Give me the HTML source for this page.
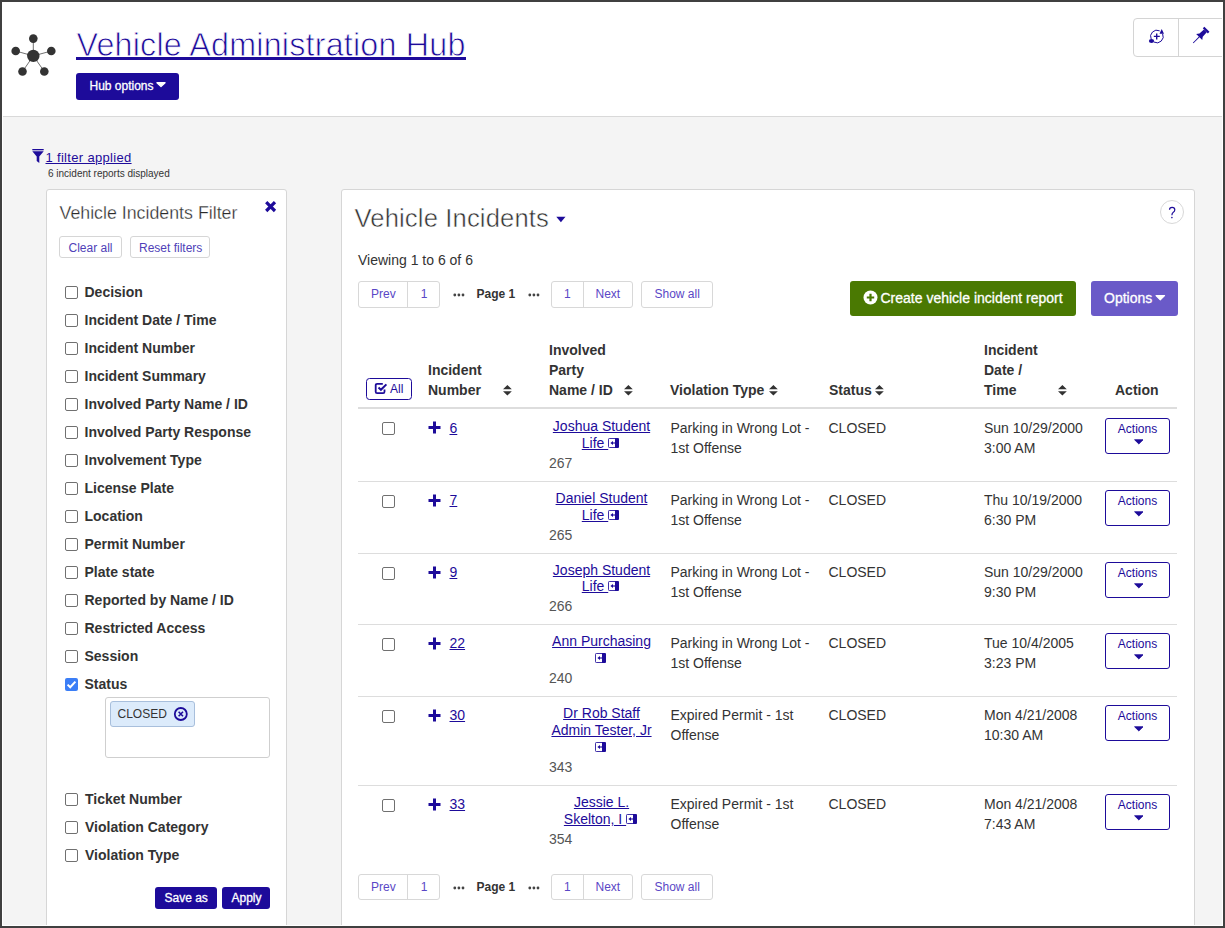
<!DOCTYPE html><html><head><meta charset="utf-8"><style>
html,body{margin:0;padding:0}
body{width:1225px;height:928px;overflow:hidden;position:relative;background:#404040;font-family:"Liberation Sans",sans-serif}
.t{position:absolute;white-space:nowrap}
.b{position:absolute;box-sizing:content-box}
u{text-decoration:underline}
</style></head><body>

<div class="b" style="left:2px;top:2px;width:1221px;height:924px;background:#fff"></div>
<div class="b" style="left:3px;top:117px;width:1219px;height:808px;background:#f4f4f4"></div>
<div class="b" style="left:3px;top:116px;width:1219px;height:1px;background:#d9d9d9"></div>
<svg class="b" style="left:8px;top:30px" width="52" height="50" viewBox="8 30 52 50">
<g stroke="#333" stroke-width="0.7"><line x1="33.3" y1="55.9" x2="33.3" y2="38.6"/><line x1="33.3" y1="55.9" x2="15.7" y2="51"/><line x1="33.3" y1="55.9" x2="51.3" y2="51"/><line x1="33.3" y1="55.9" x2="22.5" y2="71.5"/><line x1="33.3" y1="55.9" x2="44.3" y2="71.5"/></g>
<g fill="#333"><circle cx="33.3" cy="55.9" r="6.2"/><circle cx="33.3" cy="38.6" r="4.3"/><circle cx="15.7" cy="51" r="4.3"/><circle cx="51.3" cy="51" r="4.3"/><circle cx="22.5" cy="71.5" r="4.3"/><circle cx="44.3" cy="71.5" r="4.3"/></g></svg>
<div class="t " style="left:76.50px;top:26.61px;font-size:32.3px;line-height:36px;font-weight:400;color:#1d0b9a;-webkit-text-stroke:0.8px #fff;letter-spacing:0.19px">Vehicle Administration Hub</div>
<div class="b" style="left:76px;top:57px;width:390px;height:3px;background:#1d0b9a"></div>
<div class="b" style="left:76px;top:73px;width:103px;height:27px;background:#1d0b9a;border-radius:3px"></div>
<div class="t " style="left:89.50px;top:78.54px;font-size:12px;line-height:14px;font-weight:400;color:#fff;-webkit-text-stroke:0.3px #fff">Hub options</div>
<svg class="b" style="left:156px;top:82px" width="10" height="6" viewBox="0 0 10 6"><path d="M0.9 0.7 L9.1 0.7 L5 4.6 Z" fill="#fff" stroke="#fff" stroke-width="1.2" stroke-linejoin="round"/></svg>
<div class="b" style="left:1133px;top:18px;width:100px;height:37px;border:1px solid #d4d4d4;border-radius:4px;background:#fff"></div>
<div class="b" style="left:1178px;top:19px;width:1px;height:37px;background:#d4d4d4"></div>
<svg class="b" style="left:1146px;top:26px" width="20" height="20" viewBox="1146 26 20 20">
<path d="M1151.19 39.16 A6.3 6.3 0 0 1 1159.66 30.84" fill="none" stroke="#1d0b9a" stroke-width="1"/>
<path d="M1162.61 33.84 A6.3 6.3 0 0 1 1153.94 42.06" fill="none" stroke="#1d0b9a" stroke-width="1"/>
<path d="M1156.7 33.4 V39.4 M1153.8 36.4 H1159.8" stroke="#1d0b9a" stroke-width="1.4"/>
<path d="M1161.7 28.9 L1164.0 33.7 L1159.5 33.7 Z" fill="#1d0b9a"/>
<ellipse cx="1151.5" cy="41" rx="2.6" ry="1.9" fill="#1d0b9a"/>
</svg>
<svg class="b" style="left:1188px;top:22px" width="26" height="26" viewBox="1188 22 26 26">
<g transform="translate(1206.9,29.3) rotate(45)" fill="#1d0b9a">
<rect x="-3.6" y="0" width="7.2" height="2.2"/>
<path d="M-2 2.2 L2 2.2 L2.3 8.2 L4.3 10.9 L-4.3 10.9 L-2.3 8.2 Z"/>
<rect x="-0.45" y="10.8" width="0.9" height="8.6"/>
</g>
</svg>
<svg class="b" style="left:32px;top:148px" width="12" height="16" viewBox="0 0 12 16">
<rect x="0.3" y="1" width="11.4" height="1.3" fill="#1d0b9a"/>
<path d="M0.3 3.3 L11.7 3.3 L7.3 8.6 L7.3 15 L4.7 13 L4.7 8.6 Z" fill="#1d0b9a"/>
</svg>
<div class="t " style="left:45.50px;top:149.50px;font-size:13px;line-height:15px;font-weight:400;color:#1d0b9a;letter-spacing:0.32px"><u>1 filter applied</u></div>
<div class="t " style="left:48.00px;top:168.23px;font-size:10px;line-height:12px;font-weight:400;color:#333333;">6 incident reports displayed</div>
<div class="b" style="left:46px;top:189px;width:239px;height:760px;border:1px solid #d6d6d6;border-radius:3px;background:#fff"></div>
<div class="t " style="left:59.50px;top:201.53px;font-size:17.8px;line-height:22px;font-weight:400;color:#2a2a2a;-webkit-text-stroke:0.3px #fff">Vehicle Incidents Filter</div>
<svg class="b" style="left:264px;top:200px" width="13" height="13" viewBox="0 0 13 13"><path d="M2.2 2.2 L11 11 M11 2.2 L2.2 11" stroke="#1d0b9a" stroke-width="3.2" stroke-linecap="butt"/></svg>
<div class="b" style="left:59px;top:236px;width:61px;height:20px;border:1px solid #d6d6d6;border-radius:3px;background:#fff"></div>
<div class="t " style="left:68.50px;top:241.24px;font-size:12px;line-height:14px;font-weight:400;color:#4f3fb8;">Clear all</div>
<div class="b" style="left:130px;top:236px;width:78px;height:20px;border:1px solid #d6d6d6;border-radius:3px;background:#fff"></div>
<div class="t " style="left:139.00px;top:241.24px;font-size:12px;line-height:14px;font-weight:400;color:#4f3fb8;">Reset filters</div>
<div class="b" style="left:65px;top:286px;width:11px;height:11px;border:1px solid #707070;border-radius:2px;background:#fff"></div>
<div class="t " style="left:84.50px;top:283.85px;font-size:14px;line-height:16px;font-weight:700;color:#333333;">Decision</div>
<div class="b" style="left:65px;top:314px;width:11px;height:11px;border:1px solid #707070;border-radius:2px;background:#fff"></div>
<div class="t " style="left:84.50px;top:311.85px;font-size:14px;line-height:16px;font-weight:700;color:#333333;">Incident Date / Time</div>
<div class="b" style="left:65px;top:342px;width:11px;height:11px;border:1px solid #707070;border-radius:2px;background:#fff"></div>
<div class="t " style="left:84.50px;top:339.85px;font-size:14px;line-height:16px;font-weight:700;color:#333333;">Incident Number</div>
<div class="b" style="left:65px;top:370px;width:11px;height:11px;border:1px solid #707070;border-radius:2px;background:#fff"></div>
<div class="t " style="left:84.50px;top:367.85px;font-size:14px;line-height:16px;font-weight:700;color:#333333;">Incident Summary</div>
<div class="b" style="left:65px;top:398px;width:11px;height:11px;border:1px solid #707070;border-radius:2px;background:#fff"></div>
<div class="t " style="left:84.50px;top:395.85px;font-size:14px;line-height:16px;font-weight:700;color:#333333;">Involved Party Name / ID</div>
<div class="b" style="left:65px;top:426px;width:11px;height:11px;border:1px solid #707070;border-radius:2px;background:#fff"></div>
<div class="t " style="left:84.50px;top:423.85px;font-size:14px;line-height:16px;font-weight:700;color:#333333;">Involved Party Response</div>
<div class="b" style="left:65px;top:454px;width:11px;height:11px;border:1px solid #707070;border-radius:2px;background:#fff"></div>
<div class="t " style="left:84.50px;top:451.85px;font-size:14px;line-height:16px;font-weight:700;color:#333333;">Involvement Type</div>
<div class="b" style="left:65px;top:482px;width:11px;height:11px;border:1px solid #707070;border-radius:2px;background:#fff"></div>
<div class="t " style="left:84.50px;top:479.85px;font-size:14px;line-height:16px;font-weight:700;color:#333333;">License Plate</div>
<div class="b" style="left:65px;top:510px;width:11px;height:11px;border:1px solid #707070;border-radius:2px;background:#fff"></div>
<div class="t " style="left:84.50px;top:507.85px;font-size:14px;line-height:16px;font-weight:700;color:#333333;">Location</div>
<div class="b" style="left:65px;top:538px;width:11px;height:11px;border:1px solid #707070;border-radius:2px;background:#fff"></div>
<div class="t " style="left:84.50px;top:535.85px;font-size:14px;line-height:16px;font-weight:700;color:#333333;">Permit Number</div>
<div class="b" style="left:65px;top:566px;width:11px;height:11px;border:1px solid #707070;border-radius:2px;background:#fff"></div>
<div class="t " style="left:84.50px;top:563.85px;font-size:14px;line-height:16px;font-weight:700;color:#333333;">Plate state</div>
<div class="b" style="left:65px;top:594px;width:11px;height:11px;border:1px solid #707070;border-radius:2px;background:#fff"></div>
<div class="t " style="left:84.50px;top:591.85px;font-size:14px;line-height:16px;font-weight:700;color:#333333;">Reported by Name / ID</div>
<div class="b" style="left:65px;top:622px;width:11px;height:11px;border:1px solid #707070;border-radius:2px;background:#fff"></div>
<div class="t " style="left:84.50px;top:619.85px;font-size:14px;line-height:16px;font-weight:700;color:#333333;">Restricted Access</div>
<div class="b" style="left:65px;top:650px;width:11px;height:11px;border:1px solid #707070;border-radius:2px;background:#fff"></div>
<div class="t " style="left:84.50px;top:647.85px;font-size:14px;line-height:16px;font-weight:700;color:#333333;">Session</div>
<div class="b" style="left:65px;top:678px;width:13px;height:13px;border-radius:2px;background:#3b7ef6"><svg width="13" height="13" viewBox="0 0 13 13" style="position:absolute;left:0;top:0"><path d="M2.6 6.6 L5.2 9.2 L10.4 3.6" fill="none" stroke="#fff" stroke-width="2"/></svg></div>
<div class="t " style="left:84.50px;top:675.85px;font-size:14px;line-height:16px;font-weight:700;color:#333333;">Status</div>
<div class="b" style="left:105px;top:697px;width:163px;height:59px;border:1px solid #cfcfcf;border-radius:3px;background:#fff"></div>
<div class="b" style="left:110px;top:701px;width:83px;height:24px;border:1px solid #a8bfdc;border-radius:3px;background:#dcebfb"></div>
<div class="t " style="left:117.50px;top:706.64px;font-size:12px;line-height:14px;font-weight:400;color:#333333;">CLOSED</div>
<svg class="b" style="left:173px;top:706px" width="16" height="16" viewBox="0 0 16 16"><circle cx="7.8" cy="8" r="6" fill="none" stroke="#1d0b9a" stroke-width="1.8"/><path d="M5.6 5.8 L10 10.2 M10 5.8 L5.6 10.2" stroke="#1d0b9a" stroke-width="1.6"/></svg>
<div class="b" style="left:65px;top:793px;width:11px;height:11px;border:1px solid #707070;border-radius:2px;background:#fff"></div>
<div class="t " style="left:85.00px;top:791.05px;font-size:14px;line-height:16px;font-weight:700;color:#333333;">Ticket Number</div>
<div class="b" style="left:65px;top:821px;width:11px;height:11px;border:1px solid #707070;border-radius:2px;background:#fff"></div>
<div class="t " style="left:85.00px;top:819.05px;font-size:14px;line-height:16px;font-weight:700;color:#333333;">Violation Category</div>
<div class="b" style="left:65px;top:849px;width:11px;height:11px;border:1px solid #707070;border-radius:2px;background:#fff"></div>
<div class="t " style="left:85.00px;top:847.05px;font-size:14px;line-height:16px;font-weight:700;color:#333333;">Violation Type</div>
<div class="b" style="left:155px;top:887px;width:62px;height:22px;background:#1d0b9a;border-radius:3px"></div>
<div class="t " style="left:164.50px;top:891.34px;font-size:12px;line-height:14px;font-weight:400;color:#fff;-webkit-text-stroke:0.3px #fff">Save as</div>
<div class="b" style="left:222px;top:887px;width:48px;height:22px;background:#1d0b9a;border-radius:3px"></div>
<div class="t " style="left:231.50px;top:891.34px;font-size:12px;line-height:14px;font-weight:400;color:#fff;-webkit-text-stroke:0.3px #fff">Apply</div>
<div class="b" style="left:341px;top:189px;width:852px;height:760px;border:1px solid #d6d6d6;border-radius:3px;background:#fff"></div>
<div class="t " style="left:354.50px;top:203.33px;font-size:25.6px;line-height:30px;font-weight:400;color:#333333;-webkit-text-stroke:0.5px #fff;letter-spacing:0.14px">Vehicle Incidents</div>
<svg class="b" style="left:556px;top:216px" width="10" height="7" viewBox="0 0 10 7"><path d="M0.3 0.8 L9.5 0.8 L4.9 6.2 Z" fill="#1d0b9a"/></svg>
<div class="b" style="left:1160px;top:200px;width:22px;height:22px;border:1px solid #d8d8d8;border-radius:50%;background:#fff"></div>
<svg class="b" style="left:1164px;top:203px" width="16" height="18" viewBox="1164 203 16 18"><path d="M1169.5 209.8 Q1169.5 207.4 1172.1 207.4 Q1174.8 207.4 1174.8 209.8 Q1174.8 211.4 1173.3 212.3 Q1171.9 213.2 1171.9 215.2" fill="none" stroke="#1d0b9a" stroke-width="1.2"/><circle cx="1171.9" cy="217.6" r="0.8" fill="#1d0b9a"/></svg>
<div class="t " style="left:358.00px;top:251.95px;font-size:14px;line-height:16px;font-weight:400;color:#333333;">Viewing 1 to 6 of 6</div>
<div class="b" style="left:358px;top:281px;width:80px;height:25px;border:1px solid #d8d8d8;border-radius:3px;background:#fff"></div>
<div class="b" style="left:407px;top:282px;width:1px;height:25px;background:#d8d8d8"></div>
<div class="t " style="left:371.00px;top:286.54px;font-size:12px;line-height:14px;font-weight:400;color:#5a47c6;">Prev</div>
<div class="t " style="left:420.80px;top:286.54px;font-size:12px;line-height:14px;font-weight:400;color:#5a47c6;">1</div>
<svg class="b" style="left:453px;top:293px" width="12" height="4" viewBox="0 0 12 4"><circle cx="1.8" cy="2" r="1.4" fill="#444"/><circle cx="5.9" cy="2" r="1.4" fill="#444"/><circle cx="10" cy="2" r="1.4" fill="#444"/></svg>
<div class="t " style="left:476.60px;top:286.54px;font-size:12px;line-height:14px;font-weight:700;color:#333333;">Page 1</div>
<svg class="b" style="left:528px;top:293px" width="12" height="4" viewBox="0 0 12 4"><circle cx="1.8" cy="2" r="1.4" fill="#444"/><circle cx="5.9" cy="2" r="1.4" fill="#444"/><circle cx="10" cy="2" r="1.4" fill="#444"/></svg>
<div class="b" style="left:551px;top:281px;width:80px;height:25px;border:1px solid #d8d8d8;border-radius:3px;background:#fff"></div>
<div class="b" style="left:583px;top:282px;width:1px;height:25px;background:#d8d8d8"></div>
<div class="t " style="left:564.00px;top:286.54px;font-size:12px;line-height:14px;font-weight:400;color:#5a47c6;">1</div>
<div class="t " style="left:595.50px;top:286.54px;font-size:12px;line-height:14px;font-weight:400;color:#5a47c6;">Next</div>
<div class="b" style="left:641px;top:281px;width:70px;height:25px;border:1px solid #d8d8d8;border-radius:3px;background:#fff"></div>
<div class="t " style="left:654.50px;top:286.54px;font-size:12px;line-height:14px;font-weight:400;color:#5a47c6;">Show all</div>
<div class="b" style="left:850px;top:281px;width:226px;height:35px;background:#4a7902;border-radius:3px"></div>
<svg class="b" style="left:862.5px;top:290px" width="15" height="15" viewBox="0 0 15 15"><circle cx="7.5" cy="7.5" r="7" fill="#fff"/><path d="M7.5 3.8 V11.2 M3.8 7.5 H11.2" stroke="#4a7902" stroke-width="2.2"/></svg>
<div class="t " style="left:880.50px;top:289.55px;font-size:14px;line-height:16px;font-weight:400;color:#fff;-webkit-text-stroke:0.3px #fff">Create vehicle incident report</div>
<div class="b" style="left:1091px;top:281px;width:87px;height:35px;background:#6a5ac8;border-radius:3px"></div>
<div class="t " style="left:1104.00px;top:289.55px;font-size:14px;line-height:16px;font-weight:400;color:#fff;-webkit-text-stroke:0.3px #fff">Options</div>
<svg class="b" style="left:1155px;top:295px" width="11" height="6" viewBox="0 0 11 6"><path d="M1 0.6 L9.6 0.6 L5.3 4.9 Z" fill="#fff" stroke="#fff" stroke-width="1.1" stroke-linejoin="round"/></svg>
<div class="b" style="left:366px;top:378px;width:44px;height:19.6px;border:1.8px solid #1d0b9a;border-radius:3.5px;background:#fff"></div>
<svg class="b" style="left:374px;top:382px" width="14" height="13" viewBox="0 0 14 13"><path d="M10.5 7.4 V9.7 Q10.5 11.1 9.1 11.1 H3.1 Q1.7 11.1 1.7 9.7 V3.2 Q1.7 1.8 3.1 1.8 H8.8" fill="none" stroke="#1d0b9a" stroke-width="1.8"/><path d="M4.5 5.6 L6.9 7.8 L12.4 2.4" fill="none" stroke="#1d0b9a" stroke-width="2"/></svg>
<div class="t " style="left:390.00px;top:381.84px;font-size:12px;line-height:14px;font-weight:400;color:#1d0b9a;">All</div>
<div class="t " style="left:428.00px;top:360.15px;font-size:14px;line-height:20px;font-weight:700;color:#333333;">Incident</div>
<div class="t " style="left:428.00px;top:380.15px;font-size:14px;line-height:20px;font-weight:700;color:#333333;">Number</div>
<svg class="b" style="left:502.6px;top:385.3px" width="10" height="11" viewBox="0 0 10 11"><path d="M4.4 0 L8.8 4.3 L0 4.3 Z M0 6.3 L8.8 6.3 L4.4 10.6 Z" fill="#333"/></svg>
<div class="t " style="left:549.00px;top:340.25px;font-size:14px;line-height:20px;font-weight:700;color:#333333;">Involved</div>
<div class="t " style="left:549.00px;top:360.15px;font-size:14px;line-height:20px;font-weight:700;color:#333333;">Party</div>
<div class="t " style="left:549.00px;top:380.15px;font-size:14px;line-height:20px;font-weight:700;color:#333333;">Name / ID</div>
<svg class="b" style="left:623.6px;top:385.3px" width="10" height="11" viewBox="0 0 10 11"><path d="M4.4 0 L8.8 4.3 L0 4.3 Z M0 6.3 L8.8 6.3 L4.4 10.6 Z" fill="#333"/></svg>
<div class="t " style="left:670.00px;top:380.15px;font-size:14px;line-height:20px;font-weight:700;color:#333333;">Violation Type</div>
<svg class="b" style="left:768.6px;top:385.3px" width="10" height="11" viewBox="0 0 10 11"><path d="M4.4 0 L8.8 4.3 L0 4.3 Z M0 6.3 L8.8 6.3 L4.4 10.6 Z" fill="#333"/></svg>
<div class="t " style="left:829.00px;top:380.15px;font-size:14px;line-height:20px;font-weight:700;color:#333333;">Status</div>
<svg class="b" style="left:874.6px;top:385.3px" width="10" height="11" viewBox="0 0 10 11"><path d="M4.4 0 L8.8 4.3 L0 4.3 Z M0 6.3 L8.8 6.3 L4.4 10.6 Z" fill="#333"/></svg>
<div class="t " style="left:984.00px;top:340.25px;font-size:14px;line-height:20px;font-weight:700;color:#333333;">Incident</div>
<div class="t " style="left:984.00px;top:360.15px;font-size:14px;line-height:20px;font-weight:700;color:#333333;">Date /</div>
<div class="t " style="left:984.00px;top:380.15px;font-size:14px;line-height:20px;font-weight:700;color:#333333;">Time</div>
<svg class="b" style="left:1057.6px;top:385.3px" width="10" height="11" viewBox="0 0 10 11"><path d="M4.4 0 L8.8 4.3 L0 4.3 Z M0 6.3 L8.8 6.3 L4.4 10.6 Z" fill="#333"/></svg>
<div class="t " style="left:1115.00px;top:380.15px;font-size:14px;line-height:20px;font-weight:700;color:#333333;">Action</div>
<div class="b" style="left:358px;top:407px;width:819px;height:2px;background:#dddddd"></div>
<div class="b" style="left:382px;top:422px;width:11px;height:11px;border:1px solid #707070;border-radius:2px;background:#fff"></div>
<svg class="b" style="left:428px;top:421px" width="13" height="13" viewBox="0 0 13 13"><path d="M6.5 0.5 V12.5 M0.5 6.5 H12.5" stroke="#1d0b9a" stroke-width="3"/></svg>
<div class="t " style="left:449.50px;top:417.75px;font-size:14px;line-height:20px;font-weight:400;color:#1d0b9a;"><u>6</u></div>
<div class="t" style="left:549px;width:105px;text-align:center;top:417.55px;font-size:14px;line-height:17px;color:#1d0b9a"><u>Joshua Student</u></div>
<div class="t" style="left:549px;width:105px;text-align:center;top:434.55px;font-size:14px;line-height:17px;color:#1d0b9a"><u>Life&nbsp;</u><svg width="13" height="10" viewBox="0 0 13 10" style="vertical-align:0px"><path d="M7.5 0.5 H1.3 Q0.5 0.5 0.5 1.3 V8.7 Q0.5 9.5 1.3 9.5 H7.5" fill="none" stroke="#1d0b9a" stroke-width="1" opacity="0.85"/><path d="M7 0 H10 Q11 0 11 1 V9 Q11 10 10 10 H7 Z" fill="#1d0b9a"/><path d="M2.4 5 L5 2.9 V7.1 Z" fill="#1d0b9a"/><path d="M4.6 5 H7" stroke="#1d0b9a" stroke-width="1.1"/></svg></div>
<div class="t " style="left:549.00px;top:453.05px;font-size:14px;line-height:20px;font-weight:400;color:#555;">267</div>
<div class="t " style="left:670.50px;top:417.75px;font-size:14px;line-height:20px;font-weight:400;color:#333333;">Parking in Wrong Lot -</div>
<div class="t " style="left:670.50px;top:437.75px;font-size:14px;line-height:20px;font-weight:400;color:#333333;">1st Offense</div>
<div class="t " style="left:828.50px;top:417.75px;font-size:14px;line-height:20px;font-weight:400;color:#333333;">CLOSED</div>
<div class="t " style="left:984.00px;top:417.75px;font-size:14px;line-height:20px;font-weight:400;color:#333333;">Sun 10/29/2000</div>
<div class="t " style="left:984.00px;top:437.75px;font-size:14px;line-height:20px;font-weight:400;color:#333333;">3:00 AM</div>
<div class="b" style="left:1105px;top:418px;width:63px;height:34px;border:1px solid #1d0b9a;border-radius:3px;background:#fff"></div>
<div class="t" style="left:1105px;width:65px;text-align:center;top:421.84px;font-size:12px;line-height:14px;color:#1d0b9a">Actions</div>
<svg class="b" style="left:1133px;top:439px" width="12" height="6" viewBox="0 0 12 6"><path d="M1.6 0.8 L10 0.8 L5.8 4.9 Z" fill="#1d0b9a" stroke="#1d0b9a" stroke-width="0.9" stroke-linejoin="round"/></svg>
<div class="b" style="left:358px;top:481px;width:819px;height:1px;background:#dddddd"></div>
<div class="b" style="left:382px;top:495px;width:11px;height:11px;border:1px solid #707070;border-radius:2px;background:#fff"></div>
<svg class="b" style="left:428px;top:494px" width="13" height="13" viewBox="0 0 13 13"><path d="M6.5 0.5 V12.5 M0.5 6.5 H12.5" stroke="#1d0b9a" stroke-width="3"/></svg>
<div class="t " style="left:449.50px;top:490.15px;font-size:14px;line-height:20px;font-weight:400;color:#1d0b9a;"><u>7</u></div>
<div class="t" style="left:549px;width:105px;text-align:center;top:489.95px;font-size:14px;line-height:17px;color:#1d0b9a"><u>Daniel Student</u></div>
<div class="t" style="left:549px;width:105px;text-align:center;top:506.95px;font-size:14px;line-height:17px;color:#1d0b9a"><u>Life&nbsp;</u><svg width="13" height="10" viewBox="0 0 13 10" style="vertical-align:0px"><path d="M7.5 0.5 H1.3 Q0.5 0.5 0.5 1.3 V8.7 Q0.5 9.5 1.3 9.5 H7.5" fill="none" stroke="#1d0b9a" stroke-width="1" opacity="0.85"/><path d="M7 0 H10 Q11 0 11 1 V9 Q11 10 10 10 H7 Z" fill="#1d0b9a"/><path d="M2.4 5 L5 2.9 V7.1 Z" fill="#1d0b9a"/><path d="M4.6 5 H7" stroke="#1d0b9a" stroke-width="1.1"/></svg></div>
<div class="t " style="left:549.00px;top:525.45px;font-size:14px;line-height:20px;font-weight:400;color:#555;">265</div>
<div class="t " style="left:670.50px;top:490.15px;font-size:14px;line-height:20px;font-weight:400;color:#333333;">Parking in Wrong Lot -</div>
<div class="t " style="left:670.50px;top:510.15px;font-size:14px;line-height:20px;font-weight:400;color:#333333;">1st Offense</div>
<div class="t " style="left:828.50px;top:490.15px;font-size:14px;line-height:20px;font-weight:400;color:#333333;">CLOSED</div>
<div class="t " style="left:984.00px;top:490.15px;font-size:14px;line-height:20px;font-weight:400;color:#333333;">Thu 10/19/2000</div>
<div class="t " style="left:984.00px;top:510.15px;font-size:14px;line-height:20px;font-weight:400;color:#333333;">6:30 PM</div>
<div class="b" style="left:1105px;top:490px;width:63px;height:34px;border:1px solid #1d0b9a;border-radius:3px;background:#fff"></div>
<div class="t" style="left:1105px;width:65px;text-align:center;top:493.84px;font-size:12px;line-height:14px;color:#1d0b9a">Actions</div>
<svg class="b" style="left:1133px;top:511px" width="12" height="6" viewBox="0 0 12 6"><path d="M1.6 0.8 L10 0.8 L5.8 4.9 Z" fill="#1d0b9a" stroke="#1d0b9a" stroke-width="0.9" stroke-linejoin="round"/></svg>
<div class="b" style="left:358px;top:553px;width:819px;height:1px;background:#dddddd"></div>
<div class="b" style="left:382px;top:567px;width:11px;height:11px;border:1px solid #707070;border-radius:2px;background:#fff"></div>
<svg class="b" style="left:428px;top:566px" width="13" height="13" viewBox="0 0 13 13"><path d="M6.5 0.5 V12.5 M0.5 6.5 H12.5" stroke="#1d0b9a" stroke-width="3"/></svg>
<div class="t " style="left:449.50px;top:562.15px;font-size:14px;line-height:20px;font-weight:400;color:#1d0b9a;"><u>9</u></div>
<div class="t" style="left:549px;width:105px;text-align:center;top:561.95px;font-size:14px;line-height:17px;color:#1d0b9a"><u>Joseph Student</u></div>
<div class="t" style="left:549px;width:105px;text-align:center;top:577.95px;font-size:14px;line-height:17px;color:#1d0b9a"><u>Life&nbsp;</u><svg width="13" height="10" viewBox="0 0 13 10" style="vertical-align:0px"><path d="M7.5 0.5 H1.3 Q0.5 0.5 0.5 1.3 V8.7 Q0.5 9.5 1.3 9.5 H7.5" fill="none" stroke="#1d0b9a" stroke-width="1" opacity="0.85"/><path d="M7 0 H10 Q11 0 11 1 V9 Q11 10 10 10 H7 Z" fill="#1d0b9a"/><path d="M2.4 5 L5 2.9 V7.1 Z" fill="#1d0b9a"/><path d="M4.6 5 H7" stroke="#1d0b9a" stroke-width="1.1"/></svg></div>
<div class="t " style="left:549.00px;top:596.45px;font-size:14px;line-height:20px;font-weight:400;color:#555;">266</div>
<div class="t " style="left:670.50px;top:562.15px;font-size:14px;line-height:20px;font-weight:400;color:#333333;">Parking in Wrong Lot -</div>
<div class="t " style="left:670.50px;top:582.15px;font-size:14px;line-height:20px;font-weight:400;color:#333333;">1st Offense</div>
<div class="t " style="left:828.50px;top:562.15px;font-size:14px;line-height:20px;font-weight:400;color:#333333;">CLOSED</div>
<div class="t " style="left:984.00px;top:562.15px;font-size:14px;line-height:20px;font-weight:400;color:#333333;">Sun 10/29/2000</div>
<div class="t " style="left:984.00px;top:582.15px;font-size:14px;line-height:20px;font-weight:400;color:#333333;">9:30 PM</div>
<div class="b" style="left:1105px;top:562px;width:63px;height:34px;border:1px solid #1d0b9a;border-radius:3px;background:#fff"></div>
<div class="t" style="left:1105px;width:65px;text-align:center;top:565.84px;font-size:12px;line-height:14px;color:#1d0b9a">Actions</div>
<svg class="b" style="left:1133px;top:583px" width="12" height="6" viewBox="0 0 12 6"><path d="M1.6 0.8 L10 0.8 L5.8 4.9 Z" fill="#1d0b9a" stroke="#1d0b9a" stroke-width="0.9" stroke-linejoin="round"/></svg>
<div class="b" style="left:358px;top:624px;width:819px;height:1px;background:#dddddd"></div>
<div class="b" style="left:382px;top:638px;width:11px;height:11px;border:1px solid #707070;border-radius:2px;background:#fff"></div>
<svg class="b" style="left:428px;top:637px" width="13" height="13" viewBox="0 0 13 13"><path d="M6.5 0.5 V12.5 M0.5 6.5 H12.5" stroke="#1d0b9a" stroke-width="3"/></svg>
<div class="t " style="left:449.50px;top:633.15px;font-size:14px;line-height:20px;font-weight:400;color:#1d0b9a;"><u>22</u></div>
<div class="t" style="left:549px;width:105px;text-align:center;top:632.95px;font-size:14px;line-height:17px;color:#1d0b9a"><u>Ann Purchasing</u></div>
<div class="t" style="left:549px;width:105px;text-align:center;top:649.95px;font-size:14px;line-height:17px;color:#1d0b9a"><svg width="13" height="10" viewBox="0 0 13 10" style="vertical-align:0px"><path d="M7.5 0.5 H1.3 Q0.5 0.5 0.5 1.3 V8.7 Q0.5 9.5 1.3 9.5 H7.5" fill="none" stroke="#1d0b9a" stroke-width="1" opacity="0.85"/><path d="M7 0 H10 Q11 0 11 1 V9 Q11 10 10 10 H7 Z" fill="#1d0b9a"/><path d="M2.4 5 L5 2.9 V7.1 Z" fill="#1d0b9a"/><path d="M4.6 5 H7" stroke="#1d0b9a" stroke-width="1.1"/></svg></div>
<div class="t " style="left:549.00px;top:668.45px;font-size:14px;line-height:20px;font-weight:400;color:#555;">240</div>
<div class="t " style="left:670.50px;top:633.15px;font-size:14px;line-height:20px;font-weight:400;color:#333333;">Parking in Wrong Lot -</div>
<div class="t " style="left:670.50px;top:653.15px;font-size:14px;line-height:20px;font-weight:400;color:#333333;">1st Offense</div>
<div class="t " style="left:828.50px;top:633.15px;font-size:14px;line-height:20px;font-weight:400;color:#333333;">CLOSED</div>
<div class="t " style="left:984.00px;top:633.15px;font-size:14px;line-height:20px;font-weight:400;color:#333333;">Tue 10/4/2005</div>
<div class="t " style="left:984.00px;top:653.15px;font-size:14px;line-height:20px;font-weight:400;color:#333333;">3:23 PM</div>
<div class="b" style="left:1105px;top:633px;width:63px;height:34px;border:1px solid #1d0b9a;border-radius:3px;background:#fff"></div>
<div class="t" style="left:1105px;width:65px;text-align:center;top:636.84px;font-size:12px;line-height:14px;color:#1d0b9a">Actions</div>
<svg class="b" style="left:1133px;top:654px" width="12" height="6" viewBox="0 0 12 6"><path d="M1.6 0.8 L10 0.8 L5.8 4.9 Z" fill="#1d0b9a" stroke="#1d0b9a" stroke-width="0.9" stroke-linejoin="round"/></svg>
<div class="b" style="left:358px;top:696px;width:819px;height:1px;background:#dddddd"></div>
<div class="b" style="left:382px;top:710px;width:11px;height:11px;border:1px solid #707070;border-radius:2px;background:#fff"></div>
<svg class="b" style="left:428px;top:709px" width="13" height="13" viewBox="0 0 13 13"><path d="M6.5 0.5 V12.5 M0.5 6.5 H12.5" stroke="#1d0b9a" stroke-width="3"/></svg>
<div class="t " style="left:449.50px;top:705.15px;font-size:14px;line-height:20px;font-weight:400;color:#1d0b9a;"><u>30</u></div>
<div class="t" style="left:549px;width:105px;text-align:center;top:704.95px;font-size:14px;line-height:17px;color:#1d0b9a"><u>Dr Rob Staff</u></div>
<div class="t" style="left:549px;width:105px;text-align:center;top:721.95px;font-size:14px;line-height:17px;color:#1d0b9a"><u>Admin Tester, Jr</u></div>
<div class="t" style="left:549px;width:105px;text-align:center;top:738.95px;font-size:14px;line-height:17px;color:#1d0b9a"><svg width="13" height="10" viewBox="0 0 13 10" style="vertical-align:0px"><path d="M7.5 0.5 H1.3 Q0.5 0.5 0.5 1.3 V8.7 Q0.5 9.5 1.3 9.5 H7.5" fill="none" stroke="#1d0b9a" stroke-width="1" opacity="0.85"/><path d="M7 0 H10 Q11 0 11 1 V9 Q11 10 10 10 H7 Z" fill="#1d0b9a"/><path d="M2.4 5 L5 2.9 V7.1 Z" fill="#1d0b9a"/><path d="M4.6 5 H7" stroke="#1d0b9a" stroke-width="1.1"/></svg></div>
<div class="t " style="left:549.00px;top:757.45px;font-size:14px;line-height:20px;font-weight:400;color:#555;">343</div>
<div class="t " style="left:670.50px;top:705.15px;font-size:14px;line-height:20px;font-weight:400;color:#333333;">Expired Permit - 1st</div>
<div class="t " style="left:670.50px;top:725.15px;font-size:14px;line-height:20px;font-weight:400;color:#333333;">Offense</div>
<div class="t " style="left:828.50px;top:705.15px;font-size:14px;line-height:20px;font-weight:400;color:#333333;">CLOSED</div>
<div class="t " style="left:984.00px;top:705.15px;font-size:14px;line-height:20px;font-weight:400;color:#333333;">Mon 4/21/2008</div>
<div class="t " style="left:984.00px;top:725.15px;font-size:14px;line-height:20px;font-weight:400;color:#333333;">10:30 AM</div>
<div class="b" style="left:1105px;top:705px;width:63px;height:34px;border:1px solid #1d0b9a;border-radius:3px;background:#fff"></div>
<div class="t" style="left:1105px;width:65px;text-align:center;top:708.84px;font-size:12px;line-height:14px;color:#1d0b9a">Actions</div>
<svg class="b" style="left:1133px;top:726px" width="12" height="6" viewBox="0 0 12 6"><path d="M1.6 0.8 L10 0.8 L5.8 4.9 Z" fill="#1d0b9a" stroke="#1d0b9a" stroke-width="0.9" stroke-linejoin="round"/></svg>
<div class="b" style="left:358px;top:785px;width:819px;height:1px;background:#dddddd"></div>
<div class="b" style="left:382px;top:799px;width:11px;height:11px;border:1px solid #707070;border-radius:2px;background:#fff"></div>
<svg class="b" style="left:428px;top:798px" width="13" height="13" viewBox="0 0 13 13"><path d="M6.5 0.5 V12.5 M0.5 6.5 H12.5" stroke="#1d0b9a" stroke-width="3"/></svg>
<div class="t " style="left:449.50px;top:794.15px;font-size:14px;line-height:20px;font-weight:400;color:#1d0b9a;"><u>33</u></div>
<div class="t" style="left:549px;width:105px;text-align:center;top:793.95px;font-size:14px;line-height:17px;color:#1d0b9a"><u>Jessie L.</u></div>
<div class="t" style="left:549px;width:105px;text-align:center;top:810.95px;font-size:14px;line-height:17px;color:#1d0b9a"><u>Skelton, I&nbsp;</u><svg width="13" height="10" viewBox="0 0 13 10" style="vertical-align:0px"><path d="M7.5 0.5 H1.3 Q0.5 0.5 0.5 1.3 V8.7 Q0.5 9.5 1.3 9.5 H7.5" fill="none" stroke="#1d0b9a" stroke-width="1" opacity="0.85"/><path d="M7 0 H10 Q11 0 11 1 V9 Q11 10 10 10 H7 Z" fill="#1d0b9a"/><path d="M2.4 5 L5 2.9 V7.1 Z" fill="#1d0b9a"/><path d="M4.6 5 H7" stroke="#1d0b9a" stroke-width="1.1"/></svg></div>
<div class="t " style="left:549.00px;top:829.45px;font-size:14px;line-height:20px;font-weight:400;color:#555;">354</div>
<div class="t " style="left:670.50px;top:794.15px;font-size:14px;line-height:20px;font-weight:400;color:#333333;">Expired Permit - 1st</div>
<div class="t " style="left:670.50px;top:814.15px;font-size:14px;line-height:20px;font-weight:400;color:#333333;">Offense</div>
<div class="t " style="left:828.50px;top:794.15px;font-size:14px;line-height:20px;font-weight:400;color:#333333;">CLOSED</div>
<div class="t " style="left:984.00px;top:794.15px;font-size:14px;line-height:20px;font-weight:400;color:#333333;">Mon 4/21/2008</div>
<div class="t " style="left:984.00px;top:814.15px;font-size:14px;line-height:20px;font-weight:400;color:#333333;">7:43 AM</div>
<div class="b" style="left:1105px;top:794px;width:63px;height:34px;border:1px solid #1d0b9a;border-radius:3px;background:#fff"></div>
<div class="t" style="left:1105px;width:65px;text-align:center;top:797.84px;font-size:12px;line-height:14px;color:#1d0b9a">Actions</div>
<svg class="b" style="left:1133px;top:815px" width="12" height="6" viewBox="0 0 12 6"><path d="M1.6 0.8 L10 0.8 L5.8 4.9 Z" fill="#1d0b9a" stroke="#1d0b9a" stroke-width="0.9" stroke-linejoin="round"/></svg>
<div class="b" style="left:358px;top:874px;width:80px;height:24px;border:1px solid #d8d8d8;border-radius:3px;background:#fff"></div>
<div class="b" style="left:407px;top:875px;width:1px;height:24px;background:#d8d8d8"></div>
<div class="t " style="left:371.00px;top:879.54px;font-size:12px;line-height:14px;font-weight:400;color:#5a47c6;">Prev</div>
<div class="t " style="left:420.80px;top:879.54px;font-size:12px;line-height:14px;font-weight:400;color:#5a47c6;">1</div>
<svg class="b" style="left:453px;top:886px" width="12" height="4" viewBox="0 0 12 4"><circle cx="1.8" cy="2" r="1.4" fill="#444"/><circle cx="5.9" cy="2" r="1.4" fill="#444"/><circle cx="10" cy="2" r="1.4" fill="#444"/></svg>
<div class="t " style="left:476.60px;top:879.54px;font-size:12px;line-height:14px;font-weight:700;color:#333333;">Page 1</div>
<svg class="b" style="left:528px;top:886px" width="12" height="4" viewBox="0 0 12 4"><circle cx="1.8" cy="2" r="1.4" fill="#444"/><circle cx="5.9" cy="2" r="1.4" fill="#444"/><circle cx="10" cy="2" r="1.4" fill="#444"/></svg>
<div class="b" style="left:551px;top:874px;width:80px;height:24px;border:1px solid #d8d8d8;border-radius:3px;background:#fff"></div>
<div class="b" style="left:583px;top:875px;width:1px;height:24px;background:#d8d8d8"></div>
<div class="t " style="left:564.00px;top:879.54px;font-size:12px;line-height:14px;font-weight:400;color:#5a47c6;">1</div>
<div class="t " style="left:595.50px;top:879.54px;font-size:12px;line-height:14px;font-weight:400;color:#5a47c6;">Next</div>
<div class="b" style="left:641px;top:874px;width:70px;height:24px;border:1px solid #d8d8d8;border-radius:3px;background:#fff"></div>
<div class="t " style="left:654.50px;top:879.54px;font-size:12px;line-height:14px;font-weight:400;color:#5a47c6;">Show all</div>
<div class="b" style="left:2px;top:925px;width:1221px;height:1px;background:#fff"></div>
<div class="b" style="left:2px;top:2px;width:1px;height:924px;background:#fff"></div>
<div class="b" style="left:1222px;top:2px;width:1px;height:924px;background:#fff"></div>
<div class="b" style="left:0px;top:0px;width:1225px;height:2px;background:#404040"></div>
<div class="b" style="left:0px;top:926px;width:1225px;height:2px;background:#404040"></div>
<div class="b" style="left:0px;top:0px;width:2px;height:928px;background:#404040"></div>
<div class="b" style="left:1223px;top:0px;width:2px;height:928px;background:#404040"></div>
</body></html>
